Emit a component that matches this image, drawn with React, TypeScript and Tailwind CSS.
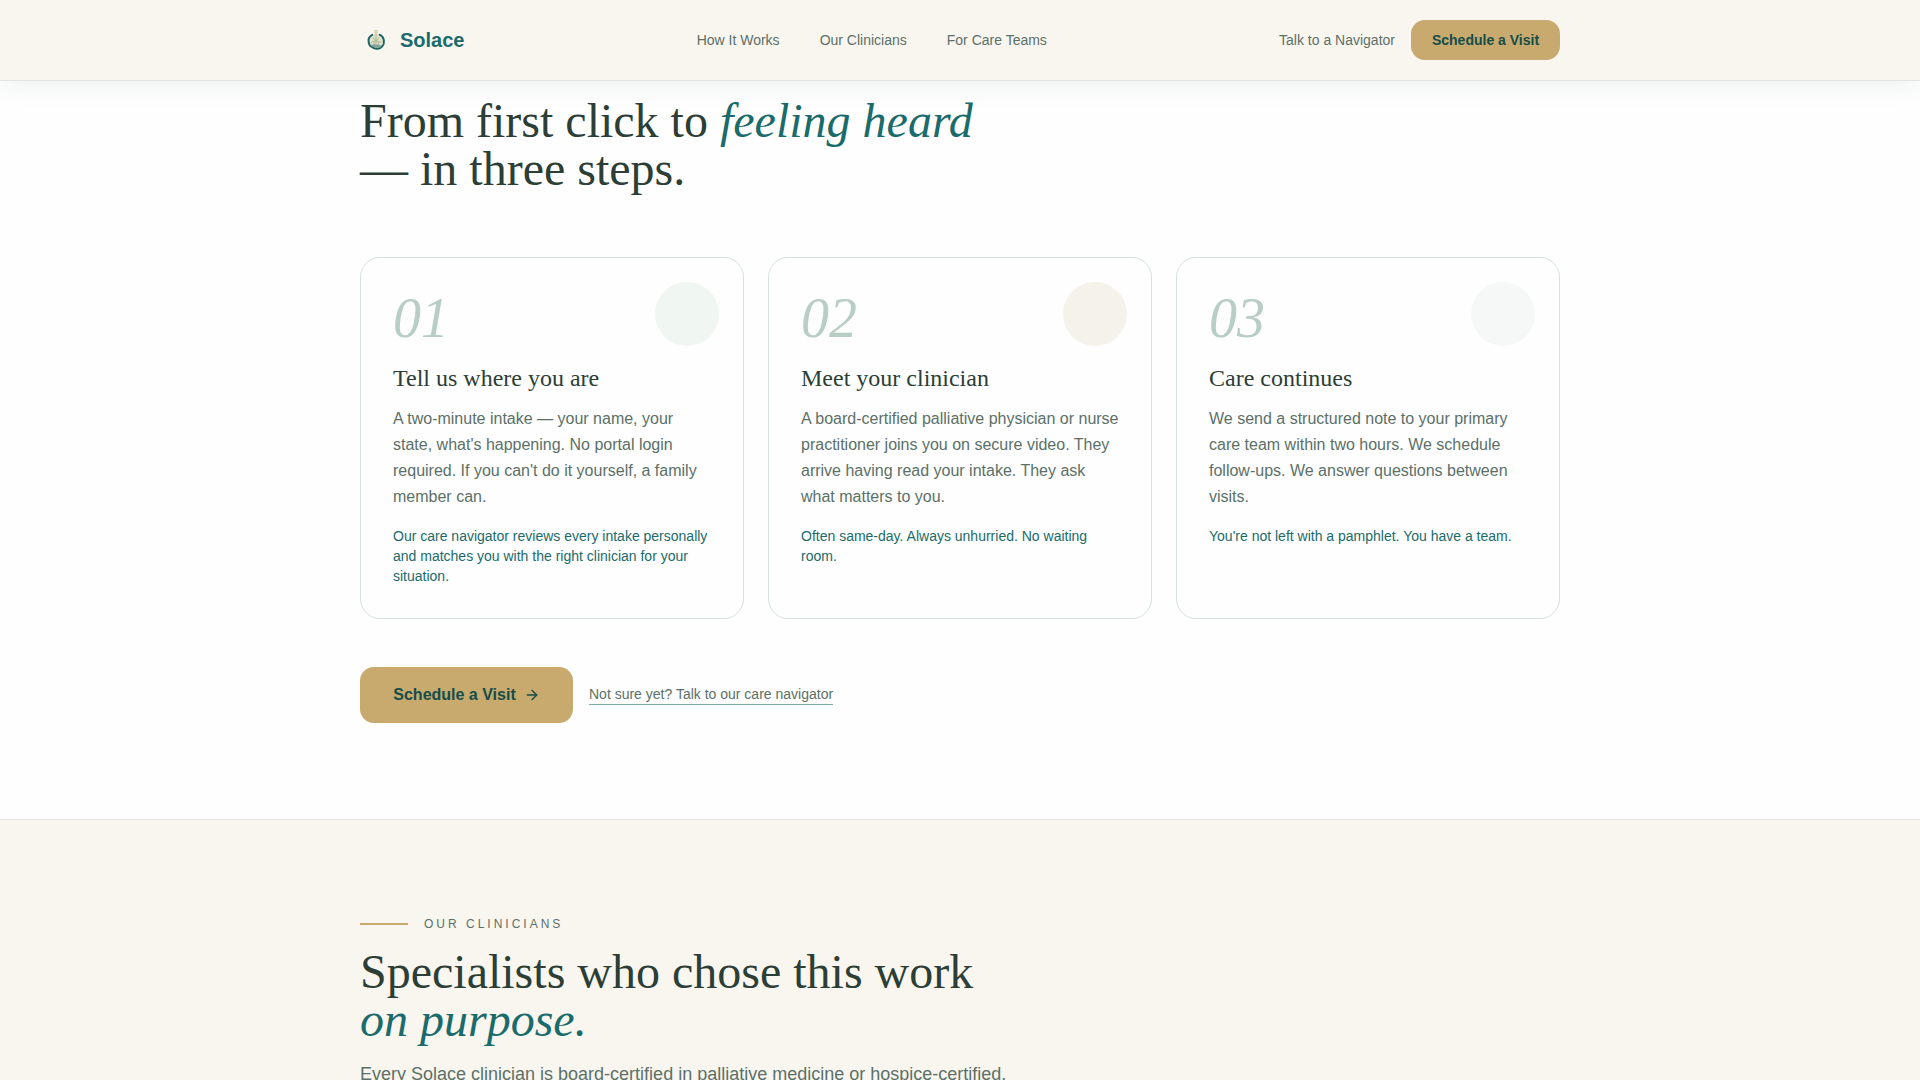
import React from "react";
import { ArrowRight } from "lucide-react";

interface Step {
  number: string;
  title: string;
  body: string;
  note: string;
  circleClass: string;
}

const steps: Step[] = [
  {
    number: "01",
    title: "Tell us where you are",
    body: "A two-minute intake — your name, your state, what's happening. No portal login required. If you can't do it yourself, a family member can.",
    note: "Our care navigator reviews every intake personally and matches you with the right clinician for your situation.",
    circleClass: "bg-[#f0f6f2]",
  },
  {
    number: "02",
    title: "Meet your clinician",
    body: "A board-certified palliative physician or nurse practitioner joins you on secure video. They arrive having read your intake. They ask what matters to you.",
    note: "Often same-day. Always unhurried. No waiting room.",
    circleClass: "bg-[#f5f2ec]",
  },
  {
    number: "03",
    title: "Care continues",
    body: "We send a structured note to your primary care team within two hours. We schedule follow-ups. We answer questions between visits.",
    note: "You're not left with a pamphlet. You have a team.",
    circleClass: "bg-[#f6f8f8]",
  },
];

const navLinks = ["How It Works", "Our Clinicians", "For Care Teams"];

const Logo: React.FC = () => (
  <svg viewBox="0 0 32 32" className="size-8" aria-hidden="true">
    <circle cx="16" cy="17.5" r="7" fill="#dde4d2" />
    <path
      d="M12.3 10.8C9.200 12.400 8 15.800 8.800 19c.4 1.700.7 2.900 2.400 3.600 2.200.9 3.600 2.700 6.600 2.200 3.900-.7 6.400-3.900 6.100-7.800-.2-2.800-1.700-5.100-4.300-6.300"
      fill="none"
      stroke="#1f6460"
      strokeWidth="2"
      strokeLinecap="round"
    />
    <path d="M10.500 21.500c3-1.600 7.500-1.600 11.500.2-1.200 1.500-3 2.300-4.800 2.300-2.400-.2-4.200-1.500-6.700-2.500z" fill="#7fa598" />
    <path
      d="M16 10v10M12.500 13.500l3.500 3 3.500-3M10.800 18.500 16 16.500l5.200 2M13 20l3-3.500 3 3.500"
      fill="none"
      stroke="#b5b78d"
      strokeWidth="1"
    />
    <circle cx="16" cy="11" r="1.800" fill="#d8cda5" />
    <circle cx="16" cy="7.500" r="1.400" fill="#efe7cd" stroke="#b9b490" strokeWidth=".7" />
  </svg>
);

const Header: React.FC = () => (
  <header className="relative z-10 border-b border-[#e1e6e2] bg-[#f9f6f0] shadow-[0_4px_24px_rgba(44,80,66,0.08)]">
    <div className="mx-auto flex h-20 max-w-[1200px] items-center justify-between">
      <a href="#" className="flex items-center gap-2 text-xl font-bold text-[#1a6b6b]">
        <Logo />
        Solace
      </a>
      <nav className="flex gap-10 text-sm text-[#5c7068]">
        {navLinks.map((label) => (
          <a key={label} href="#">
            {label}
          </a>
        ))}
      </nav>
      <div className="flex items-center gap-4 text-sm">
        <a href="#" className="text-[#5c7068]">
          Talk to a Navigator
        </a>
        <button
          type="button"
          className="h-10 min-w-[149px] rounded-[14px] bg-[#c8a96e] px-4 font-bold text-[#154d4a]"
        >
          Schedule a Visit
        </button>
      </div>
    </div>
  </header>
);

const StepCard: React.FC<{ step: Step }> = ({ step }) => (
  <article className="relative rounded-[20px] border border-[#d5e2de] p-8">
    <div className={`absolute top-6 right-6 size-16 rounded-full ${step.circleClass}`} />
    <div className="font-['Liberation_Serif',serif] text-[56px] leading-none text-[#b8cec5] italic">{step.number}</div>
    <h3 className="mt-4 font-['Liberation_Serif',serif] text-2xl text-[#2c3e35]">{step.title}</h3>
    <p className="mt-3 leading-[26px] text-[#5c7068]">{step.body}</p>
    <p className="mt-4 text-sm text-[#1a6b6b]">{step.note}</p>
  </article>
);

const HowItWorks: React.FC = () => (
  <section className="bg-[#fefefe] pt-4 pb-24">
    <div className="mx-auto max-w-[1200px]">
      <h2 className="max-w-2xl font-['Liberation_Serif',serif] text-5xl leading-[48px] text-[#2c3e35]">
        From first click to <em className="text-[#1a6b6b]">feeling heard</em> — in three steps.
      </h2>
      <div className="mt-16 grid grid-cols-3 gap-6">
        {steps.map((step) => (
          <StepCard key={step.number} step={step} />
        ))}
      </div>
      <div className="mt-12 flex items-center gap-4">
        <button
          type="button"
          className="flex h-14 min-w-[213px] items-center justify-center gap-2 rounded-[14px] bg-[#c8a96e] px-6 font-bold text-[#154d4a]"
        >
          Schedule a Visit
          <ArrowRight size={16} />
        </button>
        <a href="#" className="border-b border-[#7fa9a4] text-sm leading-[19px] text-[#5c7068]">
          Not sure yet? Talk to our care navigator
        </a>
      </div>
    </div>
  </section>
);

const Clinicians: React.FC = () => (
  <section className="border-t border-[#e1e6e2] bg-[#f9f6f0] py-24">
    <div className="mx-auto max-w-[1200px]">
      <div className="flex items-center gap-4">
        <span className="h-0.5 w-12 bg-[#c8a96e]" />
        <span className="text-xs tracking-[3px] text-[#5c7068] uppercase">Our Clinicians</span>
      </div>
      <h2 className="mt-4 max-w-2xl font-['Liberation_Serif',serif] text-5xl leading-[48px] text-[#2c3e35]">
        Specialists who chose this work <em className="text-[#1a6b6b]">on purpose.</em>
      </h2>
      <p className="mt-4 max-w-2xl text-lg text-[#5c7068]">
        Every Solace clinician is board-certified in palliative medicine or hospice-certified.
      </p>
    </div>
  </section>
);

const App: React.FC = () => {
  return (
    <div className="h-screen overflow-hidden bg-[#f9f6f0] font-['Liberation_Sans',sans-serif]">
      <Header />
      <main>
        <HowItWorks />
        <Clinicians />
      </main>
    </div>
  );
};

export default App;
